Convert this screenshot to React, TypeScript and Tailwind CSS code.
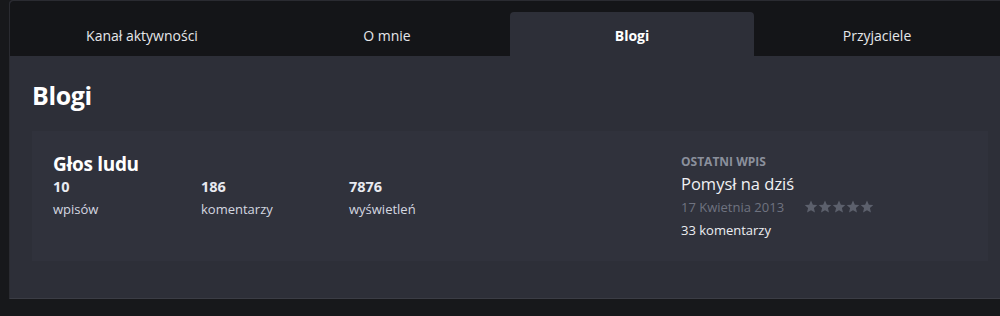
import React from "react";

const Star = () => (
  <svg width="14" height="14" viewBox="0 0 24 24" className="fill-[#5c606c]">
    <path d="M12 1l3.2 7 7.6.7-5.8 5.1 1.8 7.6L12 17.5l-6.8 3.9 1.8-7.6-5.8-5.1 7.6-.7z" />
  </svg>
);

export default function App() {
  const tabs = ["Kanał aktywności", "O mnie", "Blogi", "Przyjaciele"];
  return (
    <div
      className="w-[1000px] h-[316px] overflow-hidden bg-[#17181b] text-white"
      style={{ fontFamily: '"Open Sans", "Noto Sans", sans-serif' }}
    >
      <div className="ml-[9px] w-[1010px] h-[299px] rounded-t-[4px] border border-[#2a2b31] border-b-[#3b3d45] bg-[#2d2f38] flex flex-col">
        <div className="h-[55px] bg-[#141518] flex items-end pl-[10px] gap-px rounded-t-[4px]">
          {tabs.map((t, i) => (
            <div
              key={t}
              className={
                i === 2
                  ? "w-[244px] h-[44px] bg-[#2d2f38] rounded-t-[4px] flex items-center justify-center text-[14px] font-bold pt-[2px]"
                  : "w-[244px] h-[44px] flex items-center justify-center text-[14px] text-[#e6e7ea] pt-[2px]"
              }
            >
              {t}
            </div>
          ))}
        </div>
        <div className="px-[22px] pt-[22px]">
          <h1 className="text-[25px] font-bold leading-[34px] tracking-[-0.4px]">Blogi</h1>
          <div className="mt-[19px] w-[956px] h-[130px] bg-[#30323c] flex pl-[21px] pt-[21px]">
            <div className="w-[628px]">
              <div className="text-[19px] font-bold leading-[24px] tracking-[-0.3px]">Głos ludu</div>
              <div className="flex">
                {[
                  ["10", "wpisów"],
                  ["186", "komentarzy"],
                  ["7876", "wyświetleń"],
                ].map(([n, l]) => (
                  <div key={l} className="w-[148px]">
                    <div className="text-[14.5px] font-bold leading-[22px] text-[#e8eaf0]">{n}</div>
                    <div className="text-[13px] leading-[22px] text-[#d4d7e0]">{l}</div>
                  </div>
                ))}
              </div>
            </div>
            <div className="pt-[1px]">
              <div className="text-[12px] font-bold leading-[18px] text-[#8b909c] uppercase">Ostatni wpis</div>
              <div className="text-[16.5px] leading-[26px] text-[#f0f1f4]">Pomysł na dziś</div>
              <div className="flex items-center">
                <span className="text-[13px] leading-[20px] text-[#6f7380] w-[123px]">17 Kwietnia 2013</span>
                <span className="flex gap-0">
                  <Star /><Star /><Star /><Star /><Star />
                </span>
              </div>
              <div className="text-[13px] leading-[26px] text-[#eceef2]">33 komentarzy</div>
            </div>
          </div>
        </div>
      </div>
    </div>
  );
}
